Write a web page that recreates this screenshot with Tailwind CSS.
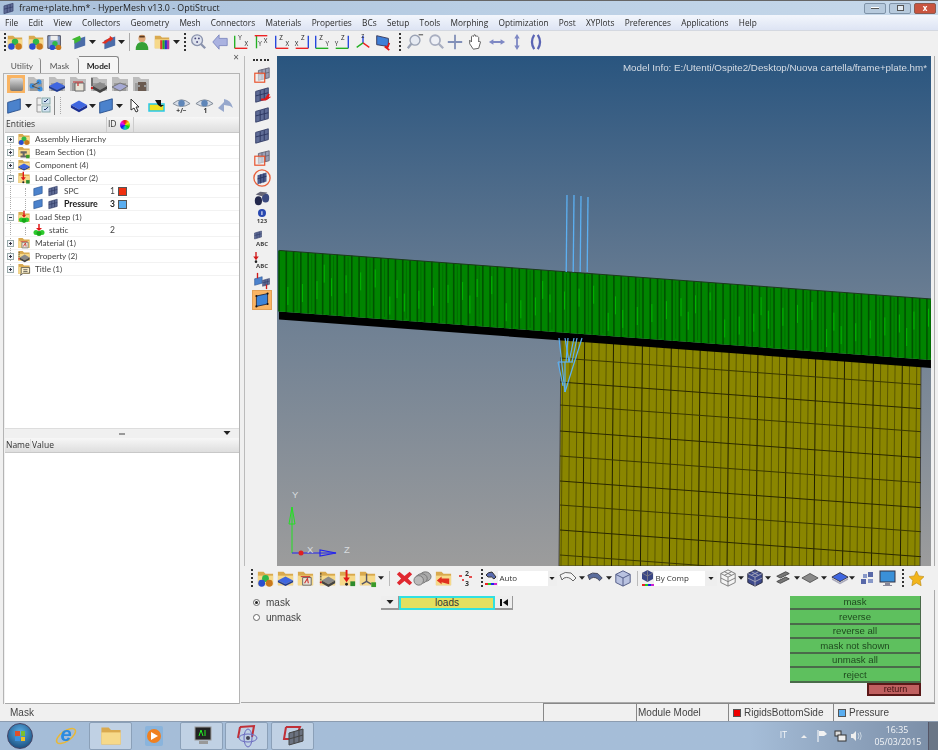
<!DOCTYPE html>
<html><head><meta charset="utf-8"><script src="https://cdn.jsdelivr.net/npm/@tailwindcss/browser@4"></script></head>
<body class="m-0 overflow-hidden">
<svg class="absolute w-0 h-0" aria-hidden="true"><defs>
<symbol id="dd" viewBox="0 0 7 4"><path d="M0 0h7L3.5 4z" fill="#222"/></symbol>
<symbol id="fold" viewBox="0 0 20 20"><path d="M2 3h6l2 2h8v12H2z" fill="#d9a94e"/><path d="M2 7h16v10H2z" fill="#f6d98a"/></symbol>
<symbol id="f-balls" viewBox="0 0 20 20"><use href="#fold"/><circle cx="10" cy="10" r="3.6" fill="#2fb84a"/><circle cx="6" cy="15" r="3.6" fill="#2a4fd0"/><circle cx="14" cy="15" r="3.6" fill="#c9781c"/></symbol>
<symbol id="f-slab" viewBox="0 0 20 20"><use href="#fold"/><path d="M10 8l8 4-8 4-8-4z" fill="#3f66e0"/><path d="M2 12v2l8 4 8-4v-2l-8 4z" fill="#1f3a90"/></symbol>
<symbol id="f-mat" viewBox="0 0 20 20"><use href="#fold"/><path d="M7 9h9v8H7z" fill="#e8e4d8" stroke="#666"/><path d="M9 15l3-5 1 5" fill="none" stroke="#c33" stroke-width="1.2"/><path d="M5 8h10" stroke="#c33"/></symbol>
<symbol id="f-prop" viewBox="0 0 20 20"><use href="#fold"/><path d="M11 8l7 4-7 4-7-4z" fill="#8a8a8a"/><path d="M4 12v3l7 4 7-4v-3l-7 4z" fill="#444"/><path d="M3 4v8" stroke="#222" stroke-dasharray="2 1"/><circle cx="3" cy="14" r="1.2" fill="#c22"/></symbol>
<symbol id="f-load" viewBox="0 0 20 20"><use href="#fold"/><path d="M9 1v10" stroke="#e01818" stroke-width="2"/><path d="M5.5 9h7L9 14z" fill="#e01818"/><circle cx="9" cy="16" r="1.5" fill="#222"/><rect x="13" y="13" width="5" height="5" fill="#2e8b2e"/></symbol>
<symbol id="f-step" viewBox="0 0 20 20"><use href="#fold"/><path d="M10 1v8" stroke="#e01818" stroke-width="2"/><path d="M7 7h6l-3 4z" fill="#e01818"/><circle cx="6" cy="14" r="3.4" fill="#2ecb2e"/><circle cx="14" cy="14" r="3.4" fill="#2ecb2e"/><circle cx="10" cy="15" r="3.4" fill="#18a818"/></symbol>
<symbol id="f-axis" viewBox="0 0 20 20"><use href="#fold"/><path d="M9 5v8l5 3M9 13l-5 3" fill="none" stroke="#556" stroke-width="1.5"/><rect x="14" y="14" width="5" height="5" fill="#3a9a2a"/></symbol>
<symbol id="f-beam" viewBox="0 0 20 20"><use href="#fold"/><path d="M5 9h9v3H11v3h3v3H5v-3h3v-3H5z" fill="#666"/><rect x="13" y="14" width="5" height="5" fill="#3a9a2a"/></symbol>
<symbol id="f-title" viewBox="0 0 20 20"><use href="#fold"/><path d="M6 8h12v8H9l-4 3 1-3z" fill="#fff4d0" stroke="#333"/><path d="M9 11h6M9 13.500h6" stroke="#333"/></symbol>
<symbol id="plane" viewBox="0 0 20 20"><path d="M3 6l14-4v12L3 18z" fill="#4b82cc" stroke="#274f8c"/></symbol>
<symbol id="grid" viewBox="0 0 20 20"><path d="M3 6l14-4v12L3 18z" fill="#5f6c96" stroke="#333d66"/><path d="M8 5v11.500M12.500 3.500v11.500M3 11l14-3.500" stroke="#2b3560" fill="none"/></symbol>
<symbol id="grid-red" viewBox="0 0 20 20"><path d="M6 5l12-3v11l-12 3z" fill="#9aa0b8" stroke="#667"/><path d="M10 4v11M14 3v11M6 10l12-3" stroke="#667" fill="none"/><rect x="2" y="8" width="11" height="10" fill="#eee" fill-opacity=".6" stroke="#e8502a" stroke-width="1.3"/></symbol>
<symbol id="grid-arr" viewBox="0 0 20 20"><use href="#grid"/><path d="M18 9l-3 4h2l-3 2-5 0" fill="none" stroke="#e01818" stroke-width="2"/></symbol>
<symbol id="eye" viewBox="0 0 20 20"><path d="M1 8q9-8 18 0q-9 6-18 0z" fill="#d8dde6" stroke="#7d8794"/><circle cx="10" cy="7.500" r="3.400" fill="#5f86b8"/></symbol>
<symbol id="gfold" viewBox="0 0 20 20"><path d="M2 3h6l2 2h8v12H2z" fill="#bdbdbd"/><path d="M4 9h12v8H4z" fill="#9c9c9c"/></symbol>
</defs></svg>

<div class="relative w-[938px] h-[750px] flex flex-col bg-[#f0f0f0] overflow-hidden font-['Open_Sans',sans-serif] text-[8.5px] text-[#333]">

<!-- title -->
<header class="blur-[0.35px] h-[15px] shrink-0 flex items-center border-t border-[#666] bg-gradient-to-r from-[#a9c0da] via-[#b9cee4] to-[#c6d8ea] pl-[2px]">
  <svg class="w-[13px] h-[13px]"><use href="#grid"/></svg>
  <span class="ml-[4px] mt-[1px] text-[8.900px] text-[#222] leading-none">frame+plate.hm* - HyperMesh v13.0 - OptiStruct</span>
  <div class="ml-auto flex gap-[3px] pr-[2px]">
    <div class="w-[22px] h-[11px] rounded-[2px] border border-[#7f93a8] bg-[#b7cadd] flex items-center justify-center"><div class="w-[8px] h-[2px] bg-white border-b border-[#555]"></div></div>
    <div class="w-[22px] h-[11px] rounded-[2px] border border-[#7f93a8] bg-[#b7cadd] flex items-center justify-center"><div class="w-[7px] h-[6px] bg-white/60 border border-[#555]"></div></div>
    <div class="w-[22px] h-[11px] rounded-[2px] border border-[#8a5a50] bg-[#c9543f] flex items-center justify-center text-white text-[8px] leading-none font-bold">x</div>
  </div>
</header>

<!-- menu -->
<nav class="blur-[0.35px] h-[16px] shrink-0 flex items-center gap-[10.300px] pl-[5px] pt-[2px] text-[8.300px] bg-gradient-to-b from-[#f3f6fc] to-[#dde4f4] border-b border-[#d4d8e0] text-[#2a2a2a]">
  <span>File</span><span>Edit</span><span>View</span><span>Collectors</span><span>Geometry</span><span>Mesh</span><span>Connectors</span><span>Materials</span><span>Properties</span><span>BCs</span><span>Setup</span><span>Tools</span><span>Morphing</span><span>Optimization</span><span>Post</span><span>XYPlots</span><span>Preferences</span><span>Applications</span><span>Help</span>
</nav>

<!-- main toolbar -->
<div class="blur-[0.35px] h-[25px] shrink-0 flex items-center pl-[4px] pb-[3px] bg-[#f0f0f0]">
  <div class="w-[2px] h-[18px] border-l-2 border-dotted border-[#333]"></div>
  <svg class="w-[18px] h-[18px]"><use href="#f-balls"/></svg>
  <svg class="ml-[3px] w-[18px] h-[18px]"><use href="#f-balls"/></svg>
  <svg class="ml-[1px] w-[18px] h-[18px]" viewBox="0 0 20 20"><path d="M2 3h14v14H2z" fill="#8aa0c8" stroke="#445"/><path d="M5 3h8v5H5z" fill="#eee"/><circle cx="10" cy="12" r="3" fill="#2fb84a"/><circle cx="7" cy="16" r="3" fill="#2a4fd0"/><circle cx="14" cy="16" r="3" fill="#c9781c"/></svg>
  <svg class="ml-[5px] w-[18px] h-[18px]" viewBox="0 0 20 20"><path d="M6 8l12-4v10L6 18z" fill="#4b6ca8"/><path d="M12 3L3 7l3 1v4l7-4V5z" fill="#3fb82f"/></svg>
  <svg class="ml-[2px] w-[7px] h-[4px]"><use href="#dd"/></svg>
  <svg class="ml-[2.500px] w-[18px] h-[18px]" viewBox="0 0 20 20"><path d="M6 8l12-4v10L6 18z" fill="#4b6ca8"/><path d="M3 11l9-6 0-2 4 3-4 4v-2l-5 4z" fill="#e03020"/></svg>
  <svg class="ml-[1px] w-[7px] h-[4px]"><use href="#dd"/></svg>
  <div class="ml-[4px] w-px h-[18px] bg-[#aaa]"></div>
  <svg class="ml-[3px] w-[18px] h-[18px]" viewBox="0 0 20 20"><circle cx="10" cy="6" r="4" fill="#e0a878"/><path d="M7 3h6v2H7z" fill="#5a3a20"/><path d="M3 19q0-9 7-9t7 9z" fill="#35a035"/></svg>
  <svg class="ml-[2px] w-[18px] h-[18px]" viewBox="0 0 20 20"><use href="#fold"/><rect x="8" y="8" width="2.500" height="10" fill="#d33"/><rect x="10.500" y="8" width="2.500" height="10" fill="#2a2"/><rect x="13" y="8" width="2.500" height="10" fill="#23c"/><rect x="15.500" y="8" width="2.500" height="10" fill="#a3a"/></svg>
  <svg class="ml-[2px] w-[7px] h-[4px]"><use href="#dd"/></svg>
  <div class="ml-[4.500px] w-[2px] h-[18px] border-l-2 border-dotted border-[#333]"></div>
  <svg class="ml-[3px] w-[18px] h-[18px]" viewBox="0 0 20 20"><circle cx="9" cy="8" r="6" fill="#dfe3ee" stroke="#8a93ad" stroke-width="1.500"/><path d="M13 12l5 5" stroke="#8a93ad" stroke-width="2.500"/><circle cx="7" cy="6" r="1" fill="#447"/><circle cx="11" cy="6" r="1" fill="#447"/><circle cx="9" cy="10" r="1" fill="#447"/></svg>
  <svg class="ml-[4px] w-[18px] h-[18px]" viewBox="0 0 20 20"><path d="M18 6H9V2L2 10l7 8v-4h9z" fill="#aab2e0" stroke="#7e88c0"/></svg>
  <svg class="ml-[3px] w-[18px] h-[18px]" viewBox="0 0 20 20"><path d="M3 17V3" fill="none" stroke="#22b022" stroke-width="1.500"/><path d="M3 17h14" stroke="#e22" stroke-width="1.500"/><text x="7" y="8" font-size="7" fill="#222">Y</text><text x="14" y="14" font-size="7" fill="#222">X</text></svg>
  <svg class="ml-[2px] w-[18px] h-[18px]" viewBox="0 0 20 20"><path d="M5 17V3" fill="none" stroke="#22b022" stroke-width="1.500"/><path d="M3 3h14" stroke="#e22" stroke-width="1.500"/><text x="7" y="14" font-size="7" fill="#222">Y</text><text x="13" y="11" font-size="7" fill="#222">X</text></svg>
  <svg class="ml-[3px] w-[18px] h-[18px]" viewBox="0 0 20 20"><path d="M3 17V3" stroke="#2244dd" stroke-width="1.500"/><path d="M3 17h14" stroke="#e22" stroke-width="1.500"/><text x="7" y="8" font-size="7" fill="#222">Z</text><text x="14" y="14" font-size="7" fill="#222">X</text></svg>
  <svg class="ml-[2px] w-[18px] h-[18px]" viewBox="0 0 20 20"><path d="M17 17V3" stroke="#2244dd" stroke-width="1.500"/><path d="M3 17h14" stroke="#e22" stroke-width="1.500"/><text x="9" y="8" font-size="7" fill="#222">Z</text><text x="2" y="14" font-size="7" fill="#222">X</text></svg>
  <svg class="ml-[2px] w-[18px] h-[18px]" viewBox="0 0 20 20"><path d="M3 17V3" stroke="#2244dd" stroke-width="1.500"/><path d="M3 17h14" stroke="#22b022" stroke-width="1.500"/><text x="7" y="8" font-size="7" fill="#222">Z</text><text x="14" y="14" font-size="7" fill="#222">Y</text></svg>
  <svg class="ml-[2px] w-[18px] h-[18px]" viewBox="0 0 20 20"><path d="M17 17V3" stroke="#2244dd" stroke-width="1.500"/><path d="M3 17h14" stroke="#22b022" stroke-width="1.500"/><text x="9" y="8" font-size="7" fill="#222">Z</text><text x="2" y="14" font-size="7" fill="#222">Y</text></svg>
  <svg class="ml-[3px] w-[18px] h-[18px]" viewBox="0 0 20 20"><path d="M10 11V3" stroke="#2244dd" stroke-width="1.500"/><path d="M10 11l7 5" stroke="#e22" stroke-width="1.500"/><path d="M10 11l-7 5" stroke="#22b022" stroke-width="1.500"/><text x="8" y="6" font-size="6" fill="#222">Z</text></svg>
  <svg class="ml-[2px] w-[18px] h-[18px]" viewBox="0 0 20 20"><path d="M3 3l13 3v9L3 13z" fill="#3f7fd8" stroke="#335"/><path d="M17 11l-2 5-3-1 5 4" fill="none" stroke="#e01818" stroke-width="2"/></svg>
  <div class="ml-[7px] w-[2px] h-[18px] border-l-2 border-dotted border-[#333]"></div>
  <svg class="ml-[5px] w-[18px] h-[18px]" viewBox="0 0 20 20"><circle cx="10" cy="8" r="5.500" fill="#e6eaf2" stroke="#9aa2b4" stroke-width="1.500"/><path d="M6 12l-4 5" stroke="#9aa2b4" stroke-width="2.500"/><path d="M14 2h5" stroke="#333"/></svg>
  <svg class="ml-[3px] w-[18px] h-[18px]" viewBox="0 0 20 20"><circle cx="9" cy="8" r="5.500" fill="#eef0f6" stroke="#a8aec0" stroke-width="2"/><path d="M13 12l5 5" stroke="#a8aec0" stroke-width="2.500"/></svg>
  <svg class="ml-[1px] w-[18px] h-[18px]" viewBox="0 0 20 20"><path d="M10 2v16M2 10h16" stroke="#8290b8" stroke-width="2"/></svg>
  <svg class="ml-[3px] w-[18px] h-[18px]" viewBox="0 0 20 20"><path d="M7 18l-4-6V8l2 2V4l1-1 1 1 1-2 1 0 1 2 1-1 1 1 1 1v5l1-1 1 1-2 7z" fill="#fff" stroke="#555"/></svg>
  <svg class="ml-[3px] w-[18px] h-[18px]" viewBox="0 0 20 20"><path d="M1 10l5-3v2h8V7l5 3-5 3v-2H6v2z" fill="#7e88c4"/></svg>
  <svg class="ml-[2px] w-[18px] h-[18px]" viewBox="0 0 20 20"><path d="M10 1l3 5h-2v8h2l-3 5-3-5h2V6H7z" fill="#7e88c4"/></svg>
  <svg class="ml-[1px] w-[18px] h-[18px]" viewBox="0 0 20 20"><path d="M8 2Q3 10 8 18M12 2q5 8 0 16" fill="none" stroke="#5a64b4" stroke-width="2.500"/></svg>
</div>

<div class="flex flex-1 min-h-0">
<!-- left panel -->
<aside class="blur-[0.35px] w-[241px] shrink-0 pl-[3px] flex flex-col relative">
  <span class="absolute right-[2px] -top-[4px] text-[10px] leading-none text-[#555]">×</span>
  <div class="h-[17px] shrink-0 flex items-end pl-px font-['Lato',sans-serif] text-[8.300px]">
    <div class="w-[37px] h-[15px] pt-[2px] flex items-center justify-center border-r border-[#888] rounded-tr-[3px] text-[#555]">Utility</div>
    <div class="w-[38px] h-[15px] pt-[2px] flex items-center justify-center border-r border-[#888] rounded-tr-[3px] text-[#555]">Mask</div>
    <div class="w-[40px] h-[17px] pt-[2px] flex items-center justify-center border-r border-t border-[#888] rounded-tr-[3px] font-bold text-[#222] bg-[#f6f6f6]">Model</div>
  </div>
  <div class="w-[237px] flex-1 min-h-0 border-l border-t border-r border-[#b4b4b4] flex flex-col">
    <div class="h-[20px] shrink-0 flex items-center pl-[3px] gap-px">
      <div class="w-[18px] h-[18px] bg-[#f9b463] flex items-center justify-center"><div class="w-[13px] h-[13px] rounded-[2px] bg-gradient-to-b from-[#ddd] to-[#777]"></div></div>
      <svg class="w-5 h-5" viewBox="0 0 20 20"><use href="#gfold"/><circle cx="6" cy="12" r="2.500" fill="#3a8ee0"/><circle cx="13" cy="8" r="2.500" fill="#3a8ee0"/><circle cx="14" cy="15" r="2.500" fill="#3a8ee0"/><path d="M6 12l7-4m-7 4l8 3" stroke="#555"/></svg>
      <svg class="w-5 h-5" viewBox="0 0 20 20"><use href="#gfold"/><path d="M10 8l8 4-8 4-8-4z" fill="#3f66e0"/><path d="M2 12v2l8 4 8-4v-2l-8 4z" fill="#1f3a90"/></svg>
      <svg class="w-5 h-5" viewBox="0 0 20 20"><use href="#gfold"/><path d="M7 9h9v8H7z" fill="#e8e4d8" stroke="#666"/><path d="M5 8h10m-5 1v3" stroke="#c33" stroke-width="1.200"/></svg>
      <svg class="w-5 h-5" viewBox="0 0 20 20"><use href="#gfold"/><path d="M11 8l7 4-7 4-7-4z" fill="#8a8a8a"/><path d="M4 12v3l7 4 7-4v-3l-7 4z" fill="#444"/><path d="M3 4v8" stroke="#222"/><circle cx="3" cy="14" r="1.200" fill="#c22"/></svg>
      <svg class="w-5 h-5" viewBox="0 0 20 20"><use href="#gfold"/><path d="M10 9l8 3-8 5-8-4z" fill="#a5a9d4" stroke="#777"/></svg>
      <svg class="w-5 h-5" viewBox="0 0 20 20"><use href="#gfold"/><path d="M7 8h8v3h-2v2h2v4H7v-4h2v-2H7z" fill="#6a5a50"/></svg>
    </div>
    <div class="h-[23px] shrink-0 flex items-center pl-[1px]">
      <svg class="w-[18px] h-[18px]"><use href="#plane"/></svg><svg class="ml-[2px] w-[7px] h-[4px]"><use href="#dd"/></svg>
      <svg class="ml-[4px] w-[15px] h-[17px]" viewBox="0 0 15 17"><path d="M1 1h4M1 8h4M1 15h4M1 1v14" fill="none" stroke="#999"/><rect x="6" y="1" width="8" height="6" fill="#cfe0f0" stroke="#8aa"/><rect x="6" y="9" width="8" height="6" fill="#cfe0f0" stroke="#8aa"/><path d="M8 4l1 1 3-3M8 12l1 1 3-3" fill="none" stroke="#236" /></svg>
      <div class="ml-[3px] w-px h-[19px] bg-[#888]"></div>
      <div class="ml-[5px] w-[2px] h-[17px] border-l border-dotted border-[#aaa]"></div>
      <svg class="ml-[8px] w-[18px] h-[18px]" viewBox="0 0 20 20"><path d="M10 4l9 5-9 5-9-5z" fill="#3f66e0"/><path d="M1 9v3l9 5 9-5V9l-9 5z" fill="#1c2f90"/></svg>
      <svg class="ml-px w-[7px] h-[4px]"><use href="#dd"/></svg>
      <svg class="ml-px w-[18px] h-[18px]"><use href="#plane"/></svg>
      <svg class="ml-px w-[7px] h-[4px]"><use href="#dd"/></svg>
      <svg class="ml-[7px] w-[10px] h-[15px]" viewBox="0 0 10 15"><path d="M1 1v11l3-2 2 4 2-1-2-4h3z" fill="#fff" stroke="#333"/></svg>
      <svg class="ml-[7px] w-[20px] h-[18px]" viewBox="0 0 20 18"><rect x="2" y="7" width="15" height="7" fill="#f0e020" stroke="#28c8e8" stroke-width="1.500"/><path d="M8 3h6v5h3l-3 2-3-2z" fill="#111"/></svg>
      <svg class="ml-[5px] w-[19px] h-[19px]" viewBox="0 0 20 20"><use href="#eye"/><text x="10" y="18" text-anchor="middle" font-size="7" font-weight="700" fill="#333">+/−</text></svg>
      <svg class="ml-[4px] w-[19px] h-[19px]" viewBox="0 0 20 20"><use href="#eye"/><text x="11" y="18" text-anchor="middle" font-size="7" font-weight="700" fill="#333">1</text></svg>
      <svg class="ml-[3px] w-[17px] h-[15px]" viewBox="0 0 17 15"><path d="M1 10L7 4V1q7 1 9 9l-3-2-6-1v7z" fill="#97a8cc"/></svg>
    </div>
    <!-- entities header -->
    <div class="h-[16px] shrink-0 ml-px flex items-stretch bg-gradient-to-b from-[#f7f7f7] to-[#dedede] border-b border-[#c8c8c8]">
      <div class="w-[102px] pl-[1px] flex items-center border-r border-[#ccc]">Entities</div>
      <div class="flex items-center pl-px">ID</div>
      <div class="w-[17px] flex items-center justify-center border-r border-[#ccc]"><div class="w-[10px] h-[10px] rounded-full bg-[conic-gradient(#e11,#ee1,#1c1,#1cc,#11e,#e1e,#e11)]"></div></div>
    </div>
    <!-- tree -->
    <div class="relative h-[296px] shrink-0 bg-white text-[#444] font-['Lato',sans-serif] text-[8.200px] border-b border-[#ddd] ml-px">
      <div class="absolute left-[5px] top-[8px] h-[128px] border-l border-dotted border-[#aaa]"></div>
      <div class="absolute left-[20px] top-[55px] h-[22px] border-l border-dotted border-[#aaa]"></div>
      <div class="absolute left-[20px] top-[94px] h-[8px] border-l border-dotted border-[#aaa]"></div>

      <div class="relative h-[13px] flex items-center border-b border-[#f2f2f2]"><svg class="ml-[2px] w-[7px] h-[7px]" viewBox="0 0 7 7"><rect x=".5" y=".5" width="6" height="6" fill="#f4f6fa" stroke="#9aa"/><path d="M2 3.500h3M3.500 2v3" stroke="#334"/></svg><svg class="ml-[3px] w-[14px] h-[14px]"><use href="#f-balls"/></svg><span class="ml-[4px]">Assembly Hierarchy</span></div>
      <div class="relative h-[13px] flex items-center border-b border-[#f2f2f2]"><svg class="ml-[2px] w-[7px] h-[7px]" viewBox="0 0 7 7"><rect x=".5" y=".5" width="6" height="6" fill="#f4f6fa" stroke="#9aa"/><path d="M2 3.500h3M3.500 2v3" stroke="#334"/></svg><svg class="ml-[3px] w-[14px] h-[14px]"><use href="#f-beam"/></svg><span class="ml-[4px]">Beam Section (1)</span></div>
      <div class="relative h-[13px] flex items-center border-b border-[#f2f2f2]"><svg class="ml-[2px] w-[7px] h-[7px]" viewBox="0 0 7 7"><rect x=".5" y=".5" width="6" height="6" fill="#f4f6fa" stroke="#9aa"/><path d="M2 3.500h3M3.500 2v3" stroke="#334"/></svg><svg class="ml-[3px] w-[14px] h-[14px]"><use href="#f-slab"/></svg><span class="ml-[4px]">Component (4)</span></div>
      <div class="relative h-[13px] flex items-center border-b border-[#f2f2f2]"><svg class="ml-[2px] w-[7px] h-[7px]" viewBox="0 0 7 7"><rect x=".5" y=".5" width="6" height="6" fill="#f4f6fa" stroke="#9aa"/><path d="M2 3.500h3" stroke="#334"/></svg><svg class="ml-[3px] w-[14px] h-[14px]"><use href="#f-load"/></svg><span class="ml-[4px]">Load Collector (2)</span></div>
      <div class="relative h-[13px] flex items-center border-b border-[#f2f2f2]"><svg class="ml-[27px] w-[12px] h-[12px]"><use href="#plane"/></svg><svg class="ml-[3px] w-[12px] h-[12px]"><use href="#grid"/></svg><span class="ml-[5px] w-[46px]">SPC</span><span class="w-[8px] text-[8.500px]">1</span><span class="w-[9px] h-[9px] bg-[#f03010] border border-[#555]"></span></div>
      <div class="relative h-[13px] flex items-center border-b border-[#f2f2f2]"><svg class="ml-[27px] w-[12px] h-[12px]"><use href="#plane"/></svg><svg class="ml-[3px] w-[12px] h-[12px]"><use href="#grid"/></svg><span class="ml-[5px] w-[46px] text-[8.800px] font-bold text-[#222]">Pressure</span><span class="w-[8px] text-[8.500px] font-bold text-[#222]">3</span><span class="w-[9px] h-[9px] bg-[#5aaef0] border border-[#555]"></span></div>
      <div class="relative h-[13px] flex items-center border-b border-[#f2f2f2]"><svg class="ml-[2px] w-[7px] h-[7px]" viewBox="0 0 7 7"><rect x=".5" y=".5" width="6" height="6" fill="#f4f6fa" stroke="#9aa"/><path d="M2 3.500h3" stroke="#334"/></svg><svg class="ml-[3px] w-[14px] h-[14px]"><use href="#f-step"/></svg><span class="ml-[4px]">Load Step (1)</span></div>
      <div class="relative h-[13px] flex items-center border-b border-[#f2f2f2]"><svg class="ml-[28px] w-[12px] h-[12px]" viewBox="0 0 12 12"><path d="M6 0v5" stroke="#e01818" stroke-width="1.500"/><path d="M3 4h6L6 7z" fill="#e01818"/><circle cx="3" cy="8.500" r="2.500" fill="#2ecb2e"/><circle cx="9" cy="8.500" r="2.500" fill="#2ecb2e"/><circle cx="6" cy="9.500" r="2.500" fill="#18a818"/></svg><span class="ml-[4px] w-[61px]">static</span><span class="text-[8.500px]">2</span></div>
      <div class="relative h-[13px] flex items-center border-b border-[#f2f2f2]"><svg class="ml-[2px] w-[7px] h-[7px]" viewBox="0 0 7 7"><rect x=".5" y=".5" width="6" height="6" fill="#f4f6fa" stroke="#9aa"/><path d="M2 3.500h3M3.500 2v3" stroke="#334"/></svg><svg class="ml-[3px] w-[14px] h-[14px]"><use href="#f-mat"/></svg><span class="ml-[4px]">Material (1)</span></div>
      <div class="relative h-[13px] flex items-center border-b border-[#f2f2f2]"><svg class="ml-[2px] w-[7px] h-[7px]" viewBox="0 0 7 7"><rect x=".5" y=".5" width="6" height="6" fill="#f4f6fa" stroke="#9aa"/><path d="M2 3.500h3M3.500 2v3" stroke="#334"/></svg><svg class="ml-[3px] w-[14px] h-[14px]"><use href="#f-prop"/></svg><span class="ml-[4px]">Property (2)</span></div>
      <div class="relative h-[13px] flex items-center border-b border-[#f2f2f2]"><svg class="ml-[2px] w-[7px] h-[7px]" viewBox="0 0 7 7"><rect x=".5" y=".5" width="6" height="6" fill="#f4f6fa" stroke="#9aa"/><path d="M2 3.500h3M3.500 2v3" stroke="#334"/></svg><svg class="ml-[3px] w-[14px] h-[14px]"><use href="#f-title"/></svg><span class="ml-[4px]">Title (1)</span></div>
    </div>
    <!-- splitter -->
    <div class="h-[9px] shrink-0 flex items-center relative">
      <span class="ml-[115px] w-[6px] h-[2px] bg-[#999]"></span>
      <svg class="absolute right-[8px] top-[2px] w-[8px] h-[4px]"><use href="#dd"/></svg>
    </div>
    <div class="h-[15px] shrink-0 ml-px flex items-center bg-gradient-to-b from-[#f7f7f7] to-[#dedede] border-b border-[#c8c8c8]">
      <span class="w-[26px] pl-[1px] border-r border-[#ddd]">Name</span><span class="pl-[1px]">Value</span>
    </div>
    <div class="flex-1 ml-px bg-white border-b border-[#aaa]"></div>
  </div>
  <div class="h-[17px] shrink-0 flex items-center pl-[7px] font-['Liberation_Sans',sans-serif] text-[10px] text-[#444]">Mask</div>
</aside>

<!-- right side -->
<div class="flex-1 min-w-0 flex flex-col">
  <div class="h-[510px] shrink-0 flex">
    <!-- vertical toolbar -->
    <div class="blur-[0.35px] w-[33px] shrink-0 ml-[3px] border-l border-[#bbb] flex flex-col items-center pt-[1px]">
      <div class="w-[16px] h-[2px] mt-[2px] border-t-2 border-dotted border-[#333]"></div>
      <div class="flex flex-col items-center gap-[2px] mt-[5px] ml-[2px]">
        <svg class="w-[18px] h-[18px]"><use href="#grid-red"/></svg>
        <svg class="w-[18px] h-[18px]"><use href="#grid-arr"/></svg>
        <svg class="w-[18px] h-[18px]"><use href="#grid"/></svg>
        <svg class="w-[18px] h-[18px] mt-[1px]"><use href="#grid"/></svg>
        <svg class="w-[18px] h-[18px] mt-[2px]"><use href="#grid-red"/></svg>
        <svg class="w-[18px] h-[18px]" viewBox="0 0 20 20"><circle cx="10" cy="10" r="9" fill="none" stroke="#e8603c" stroke-width="1.500"/><path d="M5 7l10-3v10l-10 3z" fill="#4b5a8c"/><path d="M8.500 6v10M12 5v10M5 11l10-3" stroke="#2a3460" fill="none"/></svg>
        <svg class="w-[18px] h-[18px]" viewBox="0 0 20 20"><ellipse cx="6" cy="13" rx="4" ry="5" fill="#23284c"/><ellipse cx="14" cy="10" rx="4" ry="5" fill="#3b4a80"/><path d="M3 6l5-3 8 1-6 4z" fill="#667"/></svg>
        <div class="flex flex-col items-center leading-none h-[18px]"><span class="w-[8px] h-[8px] rounded-full bg-[#2848b0] text-white text-[6px] text-center font-bold leading-[8px]">i</span><span class="text-[6px] font-bold text-[#444] mt-[1px]">123</span></div>
        <div class="flex flex-col items-center leading-none h-[20px] mt-[1px]"><svg class="w-[10px] h-[10px] -ml-[8px]"><use href="#grid"/></svg><span class="text-[6px] font-bold text-[#444] mt-[1px]">ABC</span></div>
        <div class="flex flex-col items-center leading-none h-[18px]"><svg class="w-[8px] h-[11px] -ml-[12px]" viewBox="0 0 8 12"><path d="M4 0v6" stroke="#d01818" stroke-width="1.500"/><path d="M1 5h6L4 9z" fill="#d01818"/><circle cx="4" cy="10.500" r="1.400" fill="#222"/></svg><span class="text-[6px] font-bold text-[#444]">ABC</span></div>
        <svg class="w-[18px] h-[18px]" viewBox="0 0 20 20"><use href="#plane" width="12" height="12" y="4"/><use href="#grid" width="11" height="11" x="9" y="6"/><path d="M5 1v6" stroke="#d01818" stroke-width="1.500"/><path d="M15 14v5" stroke="#d01818" stroke-width="1.500"/></svg>
        <div class="w-[20px] h-[20px] -mt-[2px] bg-[#f9b463] border border-[#e2a055] flex items-center justify-center"><svg class="w-[16px] h-[16px]" viewBox="0 0 20 20"><path d="M3 5l14-3v13L3 18z" fill="#3c84d8" stroke="#223"/><circle cx="3" cy="5" r="1.300" fill="#111"/><circle cx="17" cy="2" r="1.300" fill="#111"/><circle cx="17" cy="15" r="1.300" fill="#111"/><circle cx="3" cy="18" r="1.300" fill="#111"/></svg></div>
      </div>
    </div>
    <!-- viewport -->
    <div class="relative w-[654px] h-[510px] shrink-0 bg-gradient-to-b from-[#29557f] via-[#6d7f93] to-[#9c9c9c] overflow-hidden">
      <svg id="mesh" class="absolute inset-0 w-[654px] h-[510px]" viewBox="277 56 654 510"></svg>
      <span class="absolute blur-[0.3px] right-[4px] top-[6px] font-['Liberation_Sans',sans-serif] text-[9.800px] leading-[12px] text-[#d5dce4]">Model Info: E:/Utenti/Ospite2/Desktop/Nuova cartella/frame+plate.hm*</span>
    </div>
    <div class="flex-1 border-r border-[#aaa] mr-[3px]"></div>
  </div>

  <!-- bottom toolbar -->
  <div class="blur-[0.35px] h-[24px] shrink-0 flex items-center pl-[10px] bg-[#f0f0f0]">
    <div class="w-[2px] h-[18px] border-l-2 border-dotted border-[#333]"></div>
    <svg class="ml-[2.500px] w-[19px] h-[19px]"><use href="#f-balls"/></svg>
    <svg class="ml-[1px] w-[19px] h-[19px]"><use href="#f-slab"/></svg>
    <svg class="ml-[1px] w-[19px] h-[19px]"><use href="#f-mat"/></svg>
    <svg class="ml-[3px] w-[19px] h-[19px]"><use href="#f-prop"/></svg>
    <svg class="ml-[1px] w-[19px] h-[19px]"><use href="#f-load"/></svg>
    <svg class="ml-[1px] w-[19px] h-[19px]"><use href="#f-axis"/></svg>
    <svg class="ml-px w-[6px] h-[4px]"><use href="#dd"/></svg>
    <div class="ml-[5px] w-px h-[15px] bg-[#bbb]"></div>
    <svg class="ml-[6px] w-[17px] h-[17px]" viewBox="0 0 20 20"><path d="M4 2l6 5 6-5 3 3-5 5 5 5-3 3-6-5-6 5-3-3 5-5-5-5z" fill="#e02830"/></svg>
    <svg class="w-[19px] h-[19px]" viewBox="0 0 20 20"><ellipse cx="13" cy="8" rx="6" ry="5" fill="#aaa" stroke="#777"/><ellipse cx="9" cy="10" rx="6" ry="5" fill="#aaa" stroke="#777"/><ellipse cx="6" cy="12" rx="5" ry="5" fill="#bbb" stroke="#777"/></svg>
    <svg class="ml-[2px] w-[19px] h-[19px]" viewBox="0 0 20 20"><use href="#fold"/><path d="M16 10l-8 0 0-2-5 4 5 4v-2l8 2z" fill="#e03020"/></svg>
    <svg class="ml-[3px] w-[19px] h-[19px]" viewBox="0 0 19 19"><text x="9" y="7" font-size="7" font-weight="700" fill="#333">2</text><text x="9" y="17" font-size="7" font-weight="700" fill="#333">3</text><path d="M3 7h3M13 8h3M7 10v2" stroke="#e01818" stroke-width="1.500"/></svg>
    <div class="ml-[6px] w-[2px] h-[18px] border-l-2 border-dotted border-[#333]"></div>
    <svg class="ml-[1px] w-[14px] h-[16px]" viewBox="0 0 14 16"><path d="M2 5q2-3 6-3l4 5-2 2q-2-3-6-2z" fill="#5a6cb0" stroke="#333"/><rect x="1" y="13" width="3" height="2" fill="#e22"/><rect x="4" y="13" width="3" height="2" fill="#2c2"/><rect x="7" y="13" width="3" height="2" fill="#22e"/><rect x="10" y="13" width="3" height="2" fill="#c2c"/></svg>
    <div class="w-[50px] h-[15px] bg-white pl-[2px] flex items-center text-[8px] text-[#333]">Auto</div>
    <div class="w-[9px] h-[15px] bg-[#eee] flex items-center justify-center"><svg class="w-[6px] h-[3px]"><use href="#dd"/></svg></div>
    <svg class="ml-[1px] w-[20px] h-[18px]" viewBox="0 0 20 18"><path d="M2 6q5-4 11-2l5 5-3 3q-4-5-9-3l-2 2z" fill="#f4f4f4" stroke="#666"/></svg>
    <svg class="ml-[1px] w-[6px] h-[4px]"><use href="#dd"/></svg>
    <svg class="ml-[1px] w-[18px] h-[18px]" viewBox="0 0 20 18"><path d="M2 6q5-4 11-2l5 5-3 3q-4-5-9-3l-2 2z" fill="#5a6c9c" stroke="#445"/></svg>
    <svg class="ml-[2px] w-[6px] h-[4px]"><use href="#dd"/></svg>
    <svg class="ml-[2px] w-[18px] h-[18px]" viewBox="0 0 20 20"><path d="M10 2l8 4v9l-8 4-8-4V6z" fill="#b9c2e0" stroke="#4a5480"/><path d="M2 6l8 4 8-4M10 10v9" fill="none" stroke="#4a5480"/></svg>
    <div class="ml-[5px] w-px h-[15px] bg-[#bbb]"></div>
    <svg class="ml-[3px] w-[13px] h-[18px]" viewBox="0 0 13 18"><path d="M6.500 1l5.500 3v6l-5.500 3L1 10V4z" fill="#3a4684"/><path d="M6.500 1v12M1 4l5.500 3L12 4" stroke="#778" fill="none"/><rect x="1" y="15" width="3" height="2" fill="#e22"/><rect x="4" y="15" width="3" height="2" fill="#2c2"/><rect x="7" y="15" width="3" height="2" fill="#22e"/><rect x="10" y="15" width="3" height="2" fill="#c2c"/></svg>
    <div class="w-[51px] h-[15px] bg-white pl-[2px] flex items-center text-[8px] text-[#333]">By Comp</div>
    <div class="w-[12px] h-[15px] bg-[#eee] flex items-center justify-center"><svg class="w-[6px] h-[3px]"><use href="#dd"/></svg></div>
    <svg class="ml-[2px] w-[18px] h-[18px]" viewBox="0 0 20 20"><path d="M10 1l8 4v10l-8 4-8-4V5z" fill="#f4f4f4" stroke="#777"/><path d="M2 5l8 4 8-4M10 9v10M6 3l8 4M14 3L6 7M2 10l8 4 8-4" fill="none" stroke="#777"/></svg>
    <svg class="ml-[1px] w-[6px] h-[4px]"><use href="#dd"/></svg>
    <svg class="ml-[2px] w-[18px] h-[18px]" viewBox="0 0 20 20"><path d="M10 1l8 4v10l-8 4-8-4V5z" fill="#3e4a8c" stroke="#223"/><path d="M2 5l8 4 8-4M10 9v10M6 3l8 4M14 3L6 7M2 10l8 4 8-4" fill="none" stroke="#aab"/></svg>
    <svg class="ml-[1px] w-[6px] h-[4px]"><use href="#dd"/></svg>
    <svg class="ml-[3px] w-[18px] h-[16px]" viewBox="0 0 20 18"><path d="M3 7l10-5 4 2-10 5zM3 13l10-5 4 2-10 5z" fill="#777" stroke="#444"/></svg>
    <svg class="ml-[2px] w-[6px] h-[4px]"><use href="#dd"/></svg>
    <svg class="ml-[1px] w-[18px] h-[14px]" viewBox="0 0 20 14"><path d="M10 2l9 5-9 5-9-5z" fill="#8a8a8a" stroke="#555"/></svg>
    <svg class="ml-[2px] w-[6px] h-[4px]"><use href="#dd"/></svg>
    <svg class="ml-[4px] w-[18px] h-[14px]" viewBox="0 0 20 14"><path d="M10 1l9 5-9 5-9-5z" fill="#3f66e0" stroke="#334"/><path d="M1 7v2l9 5 9-5V7l-9 5z" fill="#aab"/></svg>
    <svg class="w-[6px] h-[4px]"><use href="#dd"/></svg>
    <svg class="ml-[5px] w-[14px] h-[14px]" viewBox="0 0 14 14"><rect x="1" y="8" width="5" height="5" fill="#5868a8"/><rect x="8" y="1" width="5" height="5" fill="#5868a8"/><rect x="8" y="8" width="5" height="4" fill="#8898c8"/><rect x="3" y="3" width="4" height="4" fill="#8898c8"/></svg>
    <svg class="ml-[5.500px] w-[17px] h-[17px]" viewBox="0 0 17 17"><rect x="1" y="1" width="15" height="11" fill="#3a90d8" stroke="#334"/><path d="M6 13h5v2h2v1H4v-1h2z" fill="#889"/></svg>
    <div class="ml-[5.500px] w-[2px] h-[18px] border-l-2 border-dotted border-[#333]"></div>
    <svg class="ml-[5.500px] w-[15px] h-[15px]" viewBox="0 0 20 20"><path d="M10 0l3 6.500 7 1-5 5 1.200 7.200L10 16l-6.200 3.700L5 12.500 0 7.500l7-1z" fill="#f2b51c" stroke="#b8860b" stroke-width=".8"/></svg>
  </div>

  <!-- panel -->
  <div class="blur-[0.35px] flex-1 min-h-0 flex flex-col mr-[3px] font-['Liberation_Sans',sans-serif]">
    <div class="flex-1 grid grid-cols-[128px_272px_1fr] pt-[6px] pl-[12px] pr-[13px] border-b border-[#aaa] border-r">
      <div class="flex flex-col gap-[2px] text-[10px] text-[#444]">
        <label class="h-[13px] flex items-center gap-[6px]"><span class="w-[7px] h-[7px] rounded-full bg-white border border-[#666] flex items-center justify-center"><span class="w-[3px] h-[3px] rounded-full bg-[#222]"></span></span>mask</label>
        <label class="h-[13px] flex items-center gap-[6px]"><span class="w-[7px] h-[7px] rounded-full bg-white border border-[#666]"></span>unmask</label>
      </div>
      <div class="flex items-start">
        <div class="w-[18px] h-[14px] bg-[#eee] border-b-2 border-r border-[#999] flex items-center justify-center"><svg class="w-[8px] h-[4px]"><use href="#dd"/></svg></div>
        <div class="w-[96px] h-[14px] bg-[#e3e060] border-2 border-[#30e0e0] flex items-center justify-center text-[10px] leading-none">loads</div>
        <div class="w-[18px] h-[14px] bg-[#eee] border-b-2 border-r border-[#999] flex items-center justify-center"><svg class="w-[8px] h-[7px]" viewBox="0 0 8 7"><path d="M0 0h2v7H0zM8 0v7L3 3.500z" fill="#111"/></svg></div>
      </div>
      <div class="flex flex-col items-end -ml-[1px] text-[9.600px] leading-none text-[#1f4a1f]">
        <div class="w-[131px] h-[14px] bg-[#5ec05e] border-r border-b-2 border-[#4a6a4a] flex items-center justify-center">mask</div>
        <div class="w-[131px] h-[15px] bg-[#5ec05e] border-r border-b-2 border-[#4a6a4a] flex items-center justify-center">reverse</div>
        <div class="w-[131px] h-[14px] bg-[#5ec05e] border-r border-b-2 border-[#4a6a4a] flex items-center justify-center">reverse all</div>
        <div class="w-[131px] h-[15px] bg-[#5ec05e] border-r border-b-2 border-[#4a6a4a] flex items-center justify-center">mask not shown</div>
        <div class="w-[131px] h-[14px] bg-[#5ec05e] border-r border-b-2 border-[#4a6a4a] flex items-center justify-center">unmask all</div>
        <div class="w-[131px] h-[15px] bg-[#5ec05e] border-r border-b-2 border-[#4a6a4a] flex items-center justify-center">reject</div>
        <div class="w-[54px] h-[13px] bg-[#c06060] border-2 border-[#5a1818] flex items-center justify-center pl-[3px] text-[9px] text-[#401010]">return</div>
      </div>
    </div>
    <!-- status -->
    <div class="h-[18px] shrink-0 flex justify-end text-[10px] text-[#444]">
      <div class="w-[93px] border-l border-t border-[#888]"></div>
      <div class="w-[92px] border-l border-t border-[#888] pl-px flex items-center">Module Model</div>
      <div class="w-[105px] border-l border-t border-[#888] pl-[4px] flex items-center gap-[3px]"><span class="w-[8px] h-[8px] bg-[#e00] border border-[#555]"></span>RigidsBottomSide</div>
      <div class="w-[102px] border-l border-t border-[#888] pl-[4px] flex items-center gap-[3px]"><span class="w-[8px] h-[8px] bg-[#5aaef0] border border-[#555]"></span>Pressure</div>
    </div>
  </div>
</div>
</div>

<!-- taskbar -->
<footer class="blur-[0.35px] h-[29px] shrink-0 flex items-center bg-gradient-to-r from-[#a5bdd8] via-[#a5bdd8] via-80% to-[#7a8da6] border-t border-[#8c9cb0]">
  <div class="ml-[7px] w-[26px] h-[26px] rounded-full bg-[radial-gradient(circle_at_50%_35%,#5ab0e8,#0e3a68)] border border-[#446] grid grid-cols-2 gap-px p-[7px]"><span class="bg-[#e0502a]"></span><span class="bg-[#7ac030]"></span><span class="bg-[#3a90e0]"></span><span class="bg-[#f0c020]"></span></div>
  <svg class="ml-[21px] w-[24px] h-[24px]" viewBox="0 0 24 24"><ellipse cx="12" cy="12" rx="11" ry="5" transform="rotate(-35 12 12)" fill="none" stroke="#e8b838" stroke-width="1.500"/><text x="12" y="17" text-anchor="middle" font-family="Liberation Sans" font-size="20" font-style="italic" font-weight="700" fill="#2a8ae0">e</text></svg>
  <div class="ml-[11px] w-[43px] h-[28px] bg-white/30 border border-[#8ba0b8] rounded-[2px] flex items-center justify-center"><svg class="w-[24px] h-[24px]"><use href="#fold"/></svg></div>
  <div class="ml-[1px] w-[42px] h-[28px] flex items-center justify-center"><div class="w-[18px] h-[20px] rounded-[2px] bg-[#8ab4dc] flex items-center justify-center"><div class="w-[14px] h-[14px] rounded-full bg-[#f08020] flex items-center justify-center"><svg class="w-[7px] h-[8px]" viewBox="0 0 7 8"><path d="M0 0l7 4-7 4z" fill="#fff"/></svg></div></div></div>
  <div class="ml-[5px] w-[43px] h-[28px] bg-white/30 border border-[#8ba0b8] rounded-[2px] flex items-center justify-center"><svg class="w-[24px] h-[22px]" viewBox="0 0 24 22"><rect x="5" y="2" width="16" height="13" fill="#222" stroke="#999"/><path d="M9 11l2-6 2 6M15 5v6" stroke="#2e2" fill="none"/><rect x="9" y="16" width="9" height="3" fill="#999"/></svg></div>
  <div class="ml-[2px] w-[43px] h-[28px] bg-white/30 border border-[#8ba0b8] rounded-[2px] flex items-center justify-center"><svg class="w-[24px] h-[24px]" viewBox="0 0 24 24"><path d="M5 3l14-1-2 11" fill="none" stroke="#c03038" stroke-width="2"/><path d="M5 3l-2 11" fill="none" stroke="#c03038" stroke-width="2"/><ellipse cx="13" cy="14" rx="9" ry="4" fill="none" stroke="#6a6ac0"/><ellipse cx="13" cy="14" rx="4" ry="9" fill="none" stroke="#6a6ac0"/><circle cx="13" cy="14" r="2" fill="#445"/></svg></div>
  <div class="ml-[3px] w-[43px] h-[28px] bg-white/30 border border-[#8ba0b8] rounded-[2px] flex items-center justify-center"><svg class="w-[24px] h-[24px]" viewBox="0 0 24 24"><path d="M5 3h14l-2 5" fill="none" stroke="#c03038" stroke-width="2"/><path d="M5 3l-2 12h5" fill="none" stroke="#c03038" stroke-width="2"/><path d="M8 9l14-4v12L8 21z" fill="#6b7280" stroke="#444"/><path d="M13 7.500v12M18 6v12M8 15l14-4" stroke="#444" fill="none"/></svg></div>
  <div class="ml-auto flex items-center text-white/90 text-[8.800px]">
    <span class="mr-[14px]">IT</span>
    <svg class="mr-[9.500px] w-[6px] h-[3px]" viewBox="0 0 6 3"><path d="M0 3l3-3 3 3z" fill="#eee"/></svg>
    <svg class="mr-[6px] w-[11px] h-[12px]" viewBox="0 0 11 12"><path d="M1 0v12" stroke="#fff"/><path d="M2 1h5l3 3-3 2H2z" fill="#f2f2f2"/></svg>
    <svg class="mr-[3.500px] w-[13px] h-[12px]" viewBox="0 0 13 12"><rect x="1" y="1" width="6" height="5" fill="#ddd" stroke="#333"/><rect x="4" y="5" width="8" height="6" fill="#eee" stroke="#333"/></svg>
    <svg class="mr-[12.500px] w-[12px] h-[12px]" viewBox="0 0 12 12"><path d="M1 4h2l3-3v10L3 8H1z" fill="#eee"/><path d="M8 3q2 3 0 6M10 2q2.500 4 0 8" fill="none" stroke="#c8d4e0"/></svg>
    <div class="w-[45px] text-center leading-[12px]">16:35<br>05/03/2015</div>
    <div class="ml-[8.500px] w-[10px] h-[28px] border-l border-[#556] bg-[#6a7686]"></div>
  </div>
</footer>
</div>

<script>
(function(){
  var s='';
  function ln(x1,y1,x2,y2,c,w){s+='<line x1="'+x1+'" y1="'+y1+'" x2="'+x2+'" y2="'+y2+'" stroke="'+c+'" stroke-width="'+(w||1)+'"/>';}
  var tY=function(x){return 250.4+(x-279)*0.0745;};
  var gH=61, bH=8;
  s+='<polygon points="561,337 921,364 920,566 559,566" fill="#8a8600" stroke="#444" stroke-width="1"/>';
  var k=0;
  for(var x=563;x<921;x+=7.22){k++;var t=337+(x-561)*0.075;var dark=k%4==0?'#222000':'#5a5700';ln(x,t,x-2,566,dark,1);}
  [358,382,405,431,456,481,505,530,555].forEach(function(y,i){ln(560,y,921,y+26.7,i%2?'#2a2800':'#3a3800',1);});
  s+='<polygon points="279,'+(tY(279)+gH)+' 931,'+(tY(931)+gH)+' 931,'+(tY(931)+gH+bH)+' 279,'+(tY(279)+gH+bH)+'" fill="#000"/>';
  s+='<polygon points="279,'+tY(279)+' 931,'+tY(931)+' 931,'+(tY(931)+gH)+' 279,'+(tY(279)+gH)+'" fill="#008400"/>';
  var j=0;
  for(var bx=279;bx<931;bx+=7.28){j++;var ty=tY(bx);var r=(j*7)%5;
    ln(bx,ty,bx,ty+gH,'#005200',1.600);
    if(r<2)ln(bx+3.6,ty+2,bx+3.6,ty+gH-2,'#006c00',1);
    if(j%2==0||r==4){var sy=ty+10+((j*13)%30);
    ln(bx+1.6,sy,bx+1.6,Math.min(sy+18,ty+gH-3),'#00b400',1);}
  }
  ln(279,tY(279),931,tY(931),'#1c3a1c',1);
  [[567,195],[574,195],[581,196],[588,197]].forEach(function(a){ln(a[0],a[1],a[0]-.8,272,'#5cb0f2',1.300);});
  [[559,338,565,392],[582,338,565,392],[565,338,569,362],[574,338,569,362],[568,338,566,362],[577,338,572,362],[558,362,563,386],[558,362,573,362],[565,362,565,392]].forEach(function(a){ln(a[0],a[1],a[2],a[3],'#5cb0f2',1.200);});
  ln(292,553,292,507,'#22e022',1);
  s+='<polygon points="292,507 295,524 289,524" fill="none" stroke="#22e022"/>';
  ln(292,553,336,553,'#2222ee',1);
  s+='<polygon points="336,553 320,550 320,556" fill="none" stroke="#2222ee" stroke-width="1.200"/>';
  s+='<circle cx="301" cy="553" r="2.500" fill="#e02020"/>';
  var lab='font-family="Liberation Sans" font-size="9.500" fill="#d8dcdf"';
  s+='<text x="292" y="498" '+lab+'>Y</text><text x="307" y="553" '+lab+'>X</text><text x="344" y="553" '+lab+'>Z</text>';
  document.getElementById('mesh').innerHTML=s;
})();
</script>
</body></html>
